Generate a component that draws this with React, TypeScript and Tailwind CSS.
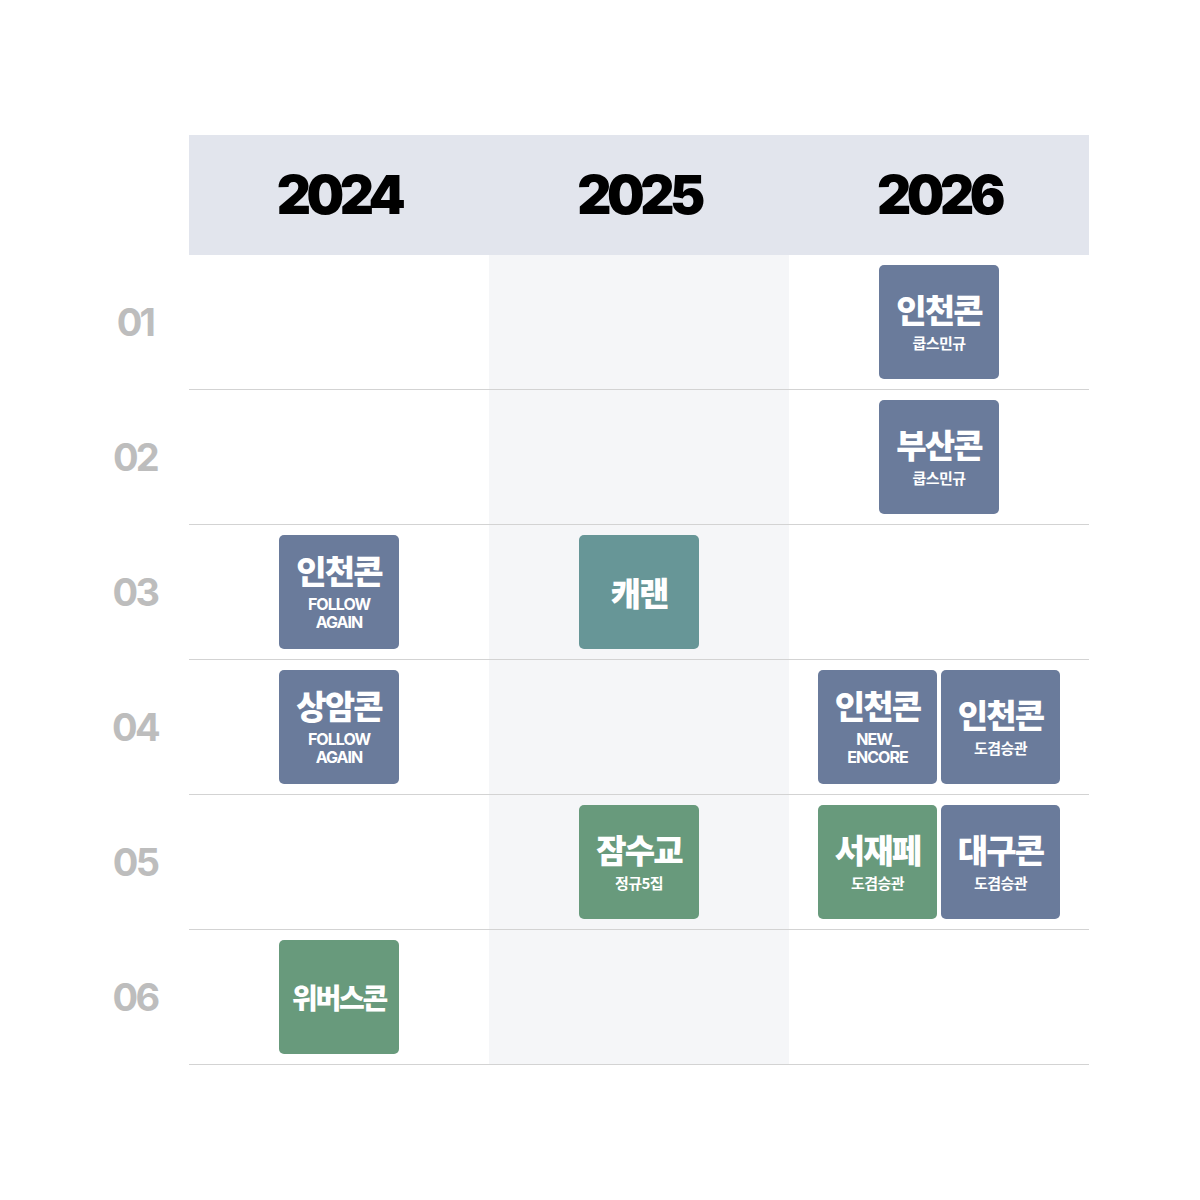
import React from 'react';

type Tone = 'slate' | 'green' | 'teal';

interface Show {
  title: string;
  sub?: string[];
  tone: Tone;
  small?: boolean;
}

const toneBg: Record<Tone, string> = {
  slate: 'bg-[#6a7b9b]',
  green: 'bg-[#689a7c]',
  teal: 'bg-[#679697]',
};

const years = ['2024', '2025', '2026'];

const rows: { label: string; cells: Show[][] }[] = [
  { label: '01', cells: [[], [], [{ title: '인천콘', sub: ['쿱스민규'], tone: 'slate' }]] },
  { label: '02', cells: [[], [], [{ title: '부산콘', sub: ['쿱스민규'], tone: 'slate' }]] },
  {
    label: '03',
    cells: [[{ title: '인천콘', sub: ['FOLLOW', 'AGAIN'], tone: 'slate' }], [{ title: '캐랜', tone: 'teal' }], []],
  },
  {
    label: '04',
    cells: [
      [{ title: '상암콘', sub: ['FOLLOW', 'AGAIN'], tone: 'slate' }],
      [],
      [
        { title: '인천콘', sub: ['NEW_', 'ENCORE'], tone: 'slate' },
        { title: '인천콘', sub: ['도겸승관'], tone: 'slate' },
      ],
    ],
  },
  {
    label: '05',
    cells: [
      [],
      [{ title: '잠수교', sub: ['정규5집'], tone: 'green' }],
      [
        { title: '서재페', sub: ['도겸승관'], tone: 'green' },
        { title: '대구콘', sub: ['도겸승관'], tone: 'slate' },
      ],
    ],
  },
  { label: '06', cells: [[{ title: '위버스콘', tone: 'green', small: true }], [], []] },
];

const kr = "font-['Noto_Sans_CJK_KR','Noto_Sans',sans-serif]";

const ShowCard: React.FC<{ item: Show; narrow?: boolean }> = ({ item, narrow }) => {
  const latin = item.sub && item.sub.length > 1;
  return (
    <div
      className={`flex flex-col items-center justify-center h-[114px] rounded-[5px] text-white ${
        narrow ? 'w-[119px]' : 'w-[120px]'
      } ${toneBg[item.tone]}`}
    >
      <div
        className={`${kr} font-black leading-none ${
          item.small ? 'text-[28px] tracking-[-0.08em]' : 'text-[33px] tracking-[-0.055em]'
        }`}
      >
        {item.title}
      </div>
      {item.sub && (
        <div
          className={`mt-[8px] text-center font-bold ${
            latin
              ? "font-['Inter',sans-serif] text-[16px] leading-[18px] tracking-[-0.06em]"
              : `${kr} text-[15px] leading-[18px] tracking-[-0.04em]`
          }`}
        >
          {item.sub.map((s, i) => (
            <React.Fragment key={s}>
              {i > 0 && <br />}
              {s}
            </React.Fragment>
          ))}
        </div>
      )}
    </div>
  );
};

export default function App() {
  return (
    <div className="w-[1200px] h-[1200px] bg-white pt-[135px] pl-[81px]">
      <div className="grid grid-cols-[108px_300px_300px_300px]">
        <div />
        {years.map((y) => (
          <div
            key={y}
            className="h-[120px] bg-[#e2e5ed] flex items-center justify-center"
          >
            <span className="font-['Inter',sans-serif] font-black text-[53px] leading-none tracking-[-0.085em] text-black">
              {y}
            </span>
          </div>
        ))}
        {rows.map((row) => (
          <React.Fragment key={row.label}>
            <div className="h-[135px] flex items-center justify-center pb-px">
              <span className="font-['Inter',sans-serif] font-bold text-[38px] leading-none tracking-[-0.07em] text-[#bdbdbd]">
                {row.label}
              </span>
            </div>
            {row.cells.map((cell, ci) => (
              <div
                key={ci}
                className={`h-[135px] border-b border-[#d3d3d3] flex items-center justify-center gap-[4px] ${
                  ci === 1 ? 'bg-[#f5f6f8]' : 'bg-white'
                }`}
              >
                {cell.map((item, i) => (
                  <ShowCard key={i} item={item} narrow={cell.length > 1} />
                ))}
              </div>
            ))}
          </React.Fragment>
        ))}
      </div>
    </div>
  );
}
